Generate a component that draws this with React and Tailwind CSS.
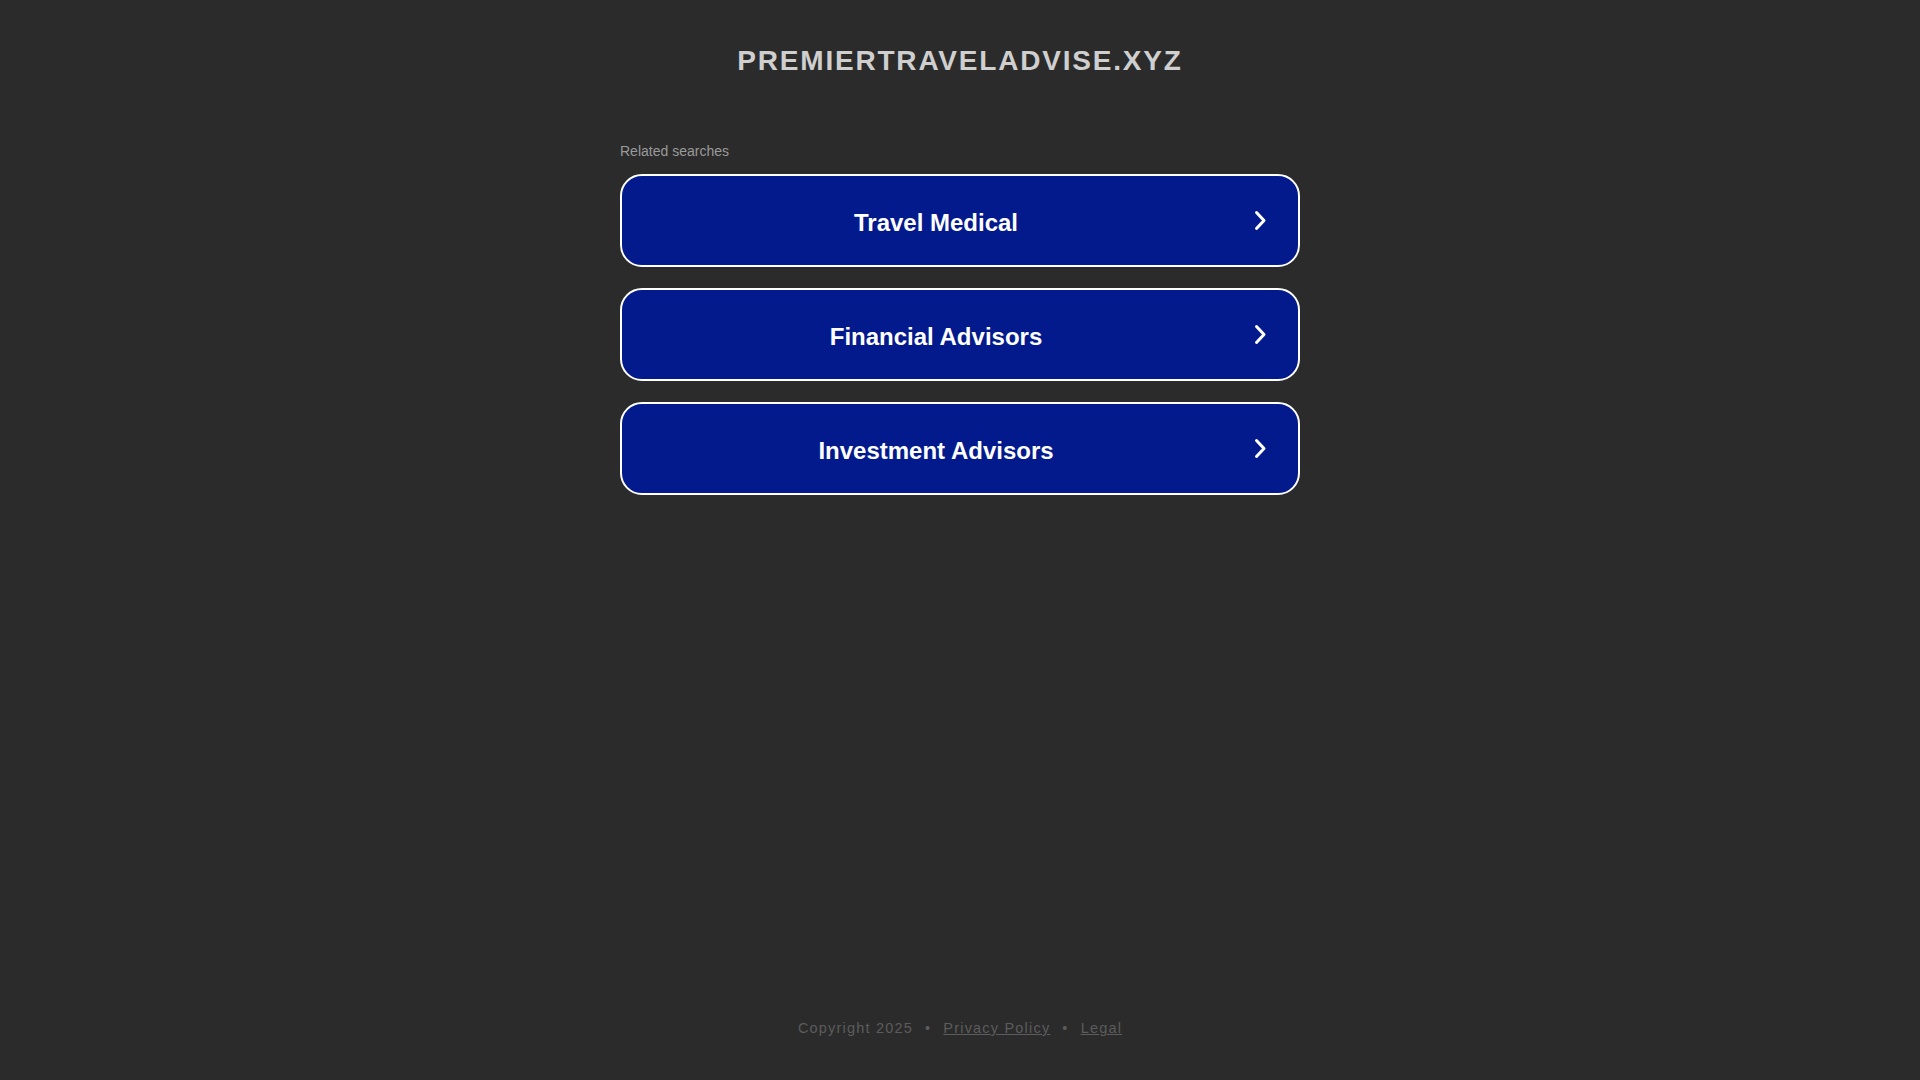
import React from "react";

const searches = ["Travel Medical", "Financial Advisors", "Investment Advisors"];

const Chevron = () => (
  <svg width="13" height="21" viewBox="0 0 13 21" fill="none" className="shrink-0">
    <path d="M2.5 2.5 L10 10.5 L2.5 18.5" stroke="white" strokeWidth="3" strokeLinecap="round" strokeLinejoin="round" />
  </svg>
);

export default function App() {
  return (
    <div
      className="min-h-screen bg-[#2b2b2b] flex flex-col items-center"
      style={{ fontFamily: '"Liberation Sans", Arial, sans-serif' }}
    >
      {/* Domain name */}
      <h1 className="mt-[45px] text-[28px] leading-[32px] font-bold tracking-[1.8px] text-[#cfcfcf]">
        PREMIERTRAVELADVISE.XYZ
      </h1>

      {/* Related searches */}
      <div className="w-[680px] mt-[66px]">
        <p className="text-[14px] leading-[16px] text-[#9a9a9a]">Related searches</p>
        <div className="mt-[15px] flex flex-col gap-[21px]">
          {searches.map((item) => (
            <a
              key={item}
              href="#"
              className="h-[93px] flex items-center rounded-[22px] border-2 border-white bg-[#021a8c] text-white"
            >
              <span className="flex-1 pt-[5px] text-center text-[24px] leading-[28px] font-bold">{item}</span>
              <span className="ml-[4px] mr-[31px] flex items-center">
                <Chevron />
              </span>
            </a>
          ))}
        </div>
      </div>

      {/* Footer */}
      <footer className="mt-auto mb-[44px] text-[14.5px] leading-[16px] tracking-[1.2px] text-[#5c5c5c]">
        <span>Copyright 2025</span>
        <span className="mx-[12px]">•</span>
        <a href="#" className="underline">Privacy Policy</a>
        <span className="mx-[12px]">•</span>
        <a href="#" className="underline">Legal</a>
      </footer>
    </div>
  );
}
